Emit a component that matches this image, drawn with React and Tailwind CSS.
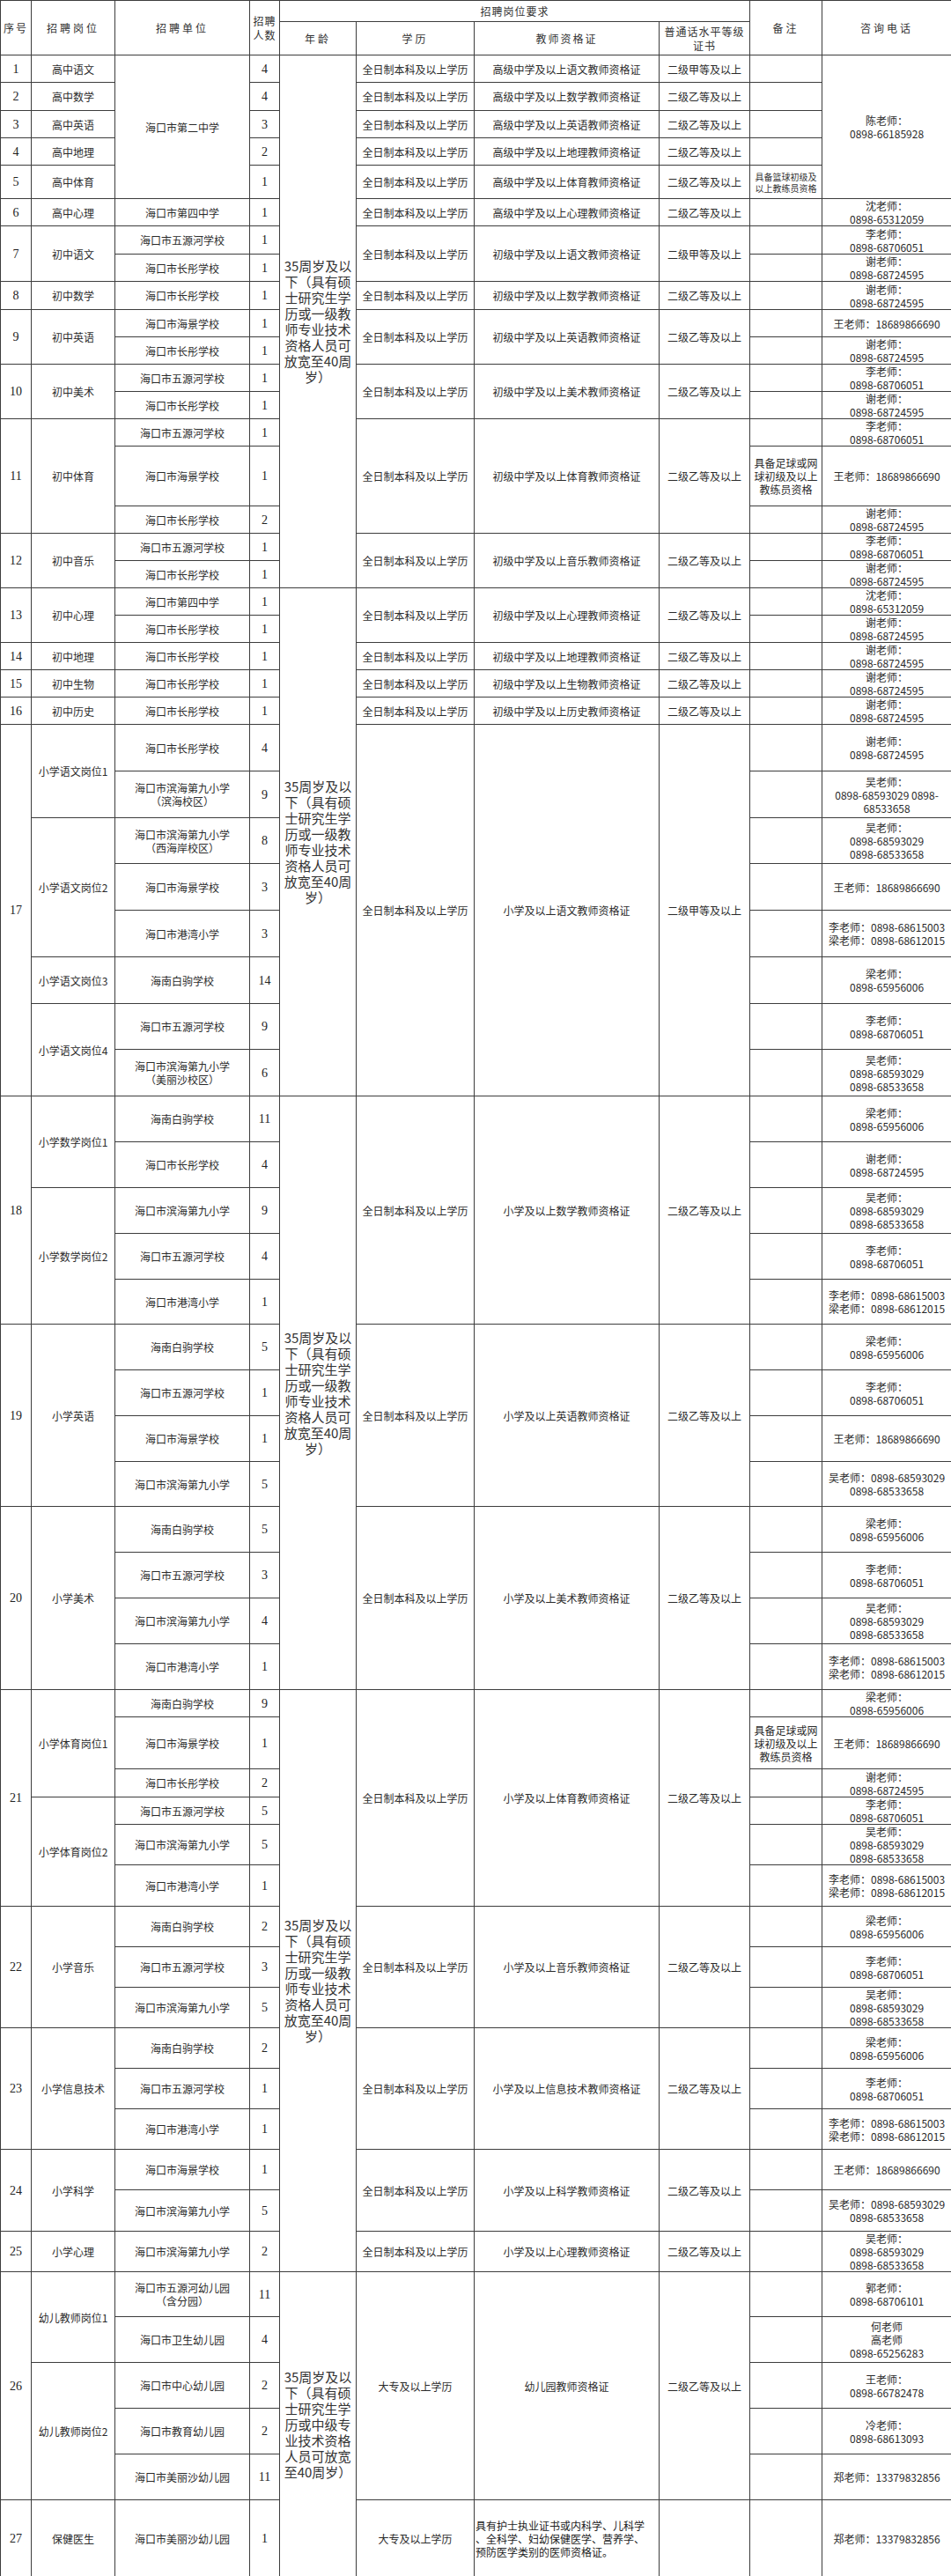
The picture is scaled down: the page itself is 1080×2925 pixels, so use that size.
import React from "react";

// row heights used in the sheet, spelled out so Tailwind sees them
const H = {
  24: "h-[24px]",
  30: "h-[30px]",
  31: "h-[31px]",
  32: "h-[32px]",
  38: "h-[38px]",
  46: "h-[46px]",
  47: "h-[47px]",
  51: "h-[51px]",
  52: "h-[52px]",
  53: "h-[53px]",
  59: "h-[59px]",
  68: "h-[68px]",
  87: "h-[87px]",
};

const AGE1 = "35周岁及以下（具有硕士研究生学历或一级教师专业技术资格人员可放宽至40周岁）";
const AGE2 = "35周岁及以下（具有硕士研究生学历或中级专业技术资格人员可放宽至40周岁）";
const BK = "全日制本科及以上学历";
const DZ = "大专及以上学历";
const JIA = "二级甲等及以上";
const YI = "二级乙等及以上";

const XIE = "谢老师：\n0898-68724595";
const LI = "李老师：\n0898-68706051";
const SHEN = "沈老师：\n0898-65312059";
const WANG = "王老师：18689866690";
const WU3 = "吴老师：\n0898-68593029\n0898-68533658";
const WU2 = "吴老师：0898-68593029\n0898-68533658";
const LL = "李老师：0898-68615003\n梁老师：0898-68612015";
const LIANG = "梁老师：\n0898-65956006";
const FOOT = "具备足球或网\n球初级及以上\n教练员资格";

const CS = "海口市长彤学校";
const WY = "海口市五源河学校";
const HJ = "海口市海景学校";
const BH = "海口市滨海第九小学";
const GW = "海口市港湾小学";
const BJ = "海南白驹学校";

const u = (unit, n, h, contact, note = "", extra = {}) => ({ unit, n, h, contact, note, ...extra });
const one = (name, unit) => [{ name, units: [unit] }];

const items = [
  {
    no: 1, age: AGE1, edu: BK, cert: "高级中学及以上语文教师资格证", pth: JIA,
    pos: one("高中语文", u("海口市第二中学", 4, 31, "陈老师：\n0898-66185928", "", { unitSpan: 5, contactSpan: 5 })),
  },
  { no: 2, edu: BK, cert: "高级中学及以上数学教师资格证", pth: YI, pos: one("高中数学", u(null, 4, 32, null)) },
  { no: 3, edu: BK, cert: "高级中学及以上英语教师资格证", pth: YI, pos: one("高中英语", u(null, 3, 31, null)) },
  { no: 4, edu: BK, cert: "高级中学及以上地理教师资格证", pth: YI, pos: one("高中地理", u(null, 2, 31, null)) },
  {
    no: 5, edu: BK, cert: "高级中学及以上体育教师资格证", pth: YI,
    pos: one("高中体育", u(null, 1, 38, null, "具备篮球初级及\n以上教练员资格", { small: true })),
  },
  { no: 6, edu: BK, cert: "高级中学及以上心理教师资格证", pth: YI, pos: one("高中心理", u("海口市第四中学", 1, 31, SHEN)) },
  {
    no: 7, edu: BK, cert: "初级中学及以上语文教师资格证", pth: JIA,
    pos: [{ name: "初中语文", units: [u(WY, 1, 32, LI), u(CS, 1, 30, XIE)] }],
  },
  { no: 8, edu: BK, cert: "初级中学及以上数学教师资格证", pth: YI, pos: one("初中数学", u(CS, 1, 32, XIE)) },
  {
    no: 9, edu: BK, cert: "初级中学及以上英语教师资格证", pth: YI,
    pos: [{ name: "初中英语", units: [u(HJ, 1, 31, WANG), u(CS, 1, 31, XIE)] }],
  },
  {
    no: 10, edu: BK, cert: "初级中学及以上美术教师资格证", pth: YI,
    pos: [{ name: "初中美术", units: [u(WY, 1, 31, LI), u(CS, 1, 31, XIE)] }],
  },
  {
    no: 11, edu: BK, cert: "初级中学及以上体育教师资格证", pth: YI,
    pos: [{ name: "初中体育", units: [u(WY, 1, 31, LI), u(HJ, 1, 68, WANG, FOOT), u(CS, 2, 31, XIE)] }],
  },
  {
    no: 12, edu: BK, cert: "初级中学及以上音乐教师资格证", pth: YI,
    pos: [{ name: "初中音乐", units: [u(WY, 1, 31, LI), u(CS, 1, 31, XIE)] }],
  },
  {
    no: 13, age: AGE1, edu: BK, cert: "初级中学及以上心理教师资格证", pth: YI,
    pos: [{ name: "初中心理", units: [u("海口市第四中学", 1, 31, SHEN), u(CS, 1, 31, XIE)] }],
  },
  { no: 14, edu: BK, cert: "初级中学及以上地理教师资格证", pth: YI, pos: one("初中地理", u(CS, 1, 31, XIE)) },
  { no: 15, edu: BK, cert: "初级中学及以上生物教师资格证", pth: YI, pos: one("初中生物", u(CS, 1, 31, XIE)) },
  { no: 16, edu: BK, cert: "初级中学及以上历史教师资格证", pth: YI, pos: one("初中历史", u(CS, 1, 31, XIE)) },
  {
    no: 17, edu: BK, cert: "小学及以上语文教师资格证", pth: JIA,
    pos: [
      {
        name: "小学语文岗位1",
        units: [u(CS, 4, 53, XIE), u(BH + "\n（滨海校区）", 9, 53, "吴老师：\n0898-68593029 0898-\n68533658")],
      },
      {
        name: "小学语文岗位2",
        units: [u(BH + "\n（西海岸校区）", 8, 52, WU3), u(HJ, 3, 53, WANG), u(GW, 3, 53, LL)],
      },
      { name: "小学语文岗位3", units: [u(BJ, 14, 53, LIANG)] },
      { name: "小学语文岗位4", units: [u(WY, 9, 52, LI), u(BH + "\n（美丽沙校区）", 6, 53, WU3)] },
    ],
  },
  {
    no: 18, age: AGE1, edu: BK, cert: "小学及以上数学教师资格证", pth: YI,
    pos: [
      { name: "小学数学岗位1", units: [u(BJ, 11, 52, LIANG), u(CS, 4, 52, XIE)] },
      { name: "小学数学岗位2", units: [u(BH, 9, 52, WU3), u(WY, 4, 52, LI), u(GW, 1, 51, LL)] },
    ],
  },
  {
    no: 19, edu: BK, cert: "小学及以上英语教师资格证", pth: YI,
    pos: [{ name: "小学英语", units: [u(BJ, 5, 52, LIANG), u(WY, 1, 52, LI), u(HJ, 1, 52, WANG), u(BH, 5, 51, WU2)] }],
  },
  {
    no: 20, edu: BK, cert: "小学及以上美术教师资格证", pth: YI,
    pos: [{ name: "小学美术", units: [u(BJ, 5, 52, LIANG), u(WY, 3, 52, LI), u(BH, 4, 52, WU3), u(GW, 1, 52, LL)] }],
  },
  {
    no: 21, age: AGE1, edu: BK, cert: "小学及以上体育教师资格证", pth: YI,
    pos: [
      { name: "小学体育岗位1", units: [u(BJ, 9, 31, LIANG), u(HJ, 1, 59, WANG, FOOT), u(CS, 2, 32, XIE)] },
      { name: "小学体育岗位2", units: [u(WY, 5, 30, LI), u(BH, 5, 46, WU3), u(GW, 1, 47, LL)] },
    ],
  },
  {
    no: 22, edu: BK, cert: "小学及以上音乐教师资格证", pth: YI,
    pos: [{ name: "小学音乐", units: [u(BJ, 2, 46, LIANG), u(WY, 3, 46, LI), u(BH, 5, 46, WU3)] }],
  },
  {
    no: 23, edu: BK, cert: "小学及以上信息技术教师资格证", pth: YI,
    pos: [{ name: "小学信息技术", units: [u(BJ, 2, 46, LIANG), u(WY, 1, 46, LI), u(GW, 1, 46, LL)] }],
  },
  {
    no: 24, edu: BK, cert: "小学及以上科学教师资格证", pth: YI,
    pos: [{ name: "小学科学", units: [u(HJ, 1, 46, WANG), u(BH, 5, 47, WU2)] }],
  },
  { no: 25, edu: BK, cert: "小学及以上心理教师资格证", pth: YI, pos: one("小学心理", u(BH, 2, 46, WU3)) },
  {
    no: 26, age: AGE2, edu: DZ, cert: "幼儿园教师资格证", pth: YI,
    pos: [
      {
        name: "幼儿教师岗位1",
        units: [
          u("海口市五源河幼儿园\n（含分园）", 11, 51, "郭老师：\n0898-68706101"),
          u("海口市卫生幼儿园", 4, 52, "何老师\n高老师\n0898-65256283"),
        ],
      },
      {
        name: "幼儿教师岗位2",
        units: [
          u("海口市中心幼儿园", 2, 52, "王老师：\n0898-66782478"),
          u("海口市教育幼儿园", 2, 52, "冷老师：\n0898-68613093"),
          u("海口市美丽沙幼儿园", 11, 52, "郑老师：13379832856"),
        ],
      },
    ],
  },
  {
    no: 27, edu: DZ, certLeft: true, pth: "",
    cert: "具有护士执业证书或内科学、儿科学\n、全科学、妇幼保健医学、营养学、\n预防医学类别的医师资格证。",
    pos: one("保健医生", u("海口市美丽沙幼儿园", 1, 87, "郑老师：13379832856")),
  },
];

const line = "border border-[#3d3d3d]";
const cell = `${line} px-[2px] py-0 text-center align-middle whitespace-pre-line text-[12px] leading-[15px] text-[#2b2b2b]`;
const num = `${line} px-0 py-0 text-center align-middle font-['Liberation_Serif',serif] text-[14px] text-[#222]`;
const ageCls = `${line} px-[4px] py-0 text-center align-middle text-[15px] leading-[18px] text-[#333]`;
const leftCell = `${line} pl-[1px] pr-[2px] py-0 text-left align-middle whitespace-pre-line text-[12px] leading-[15px] text-[#222]`;
const smallNote = `${line} px-[2px] py-0 text-center align-middle whitespace-pre-line text-[10px] leading-[13px] text-[#333]`;
const head = `${line} px-[2px] py-0 text-center align-middle whitespace-pre-line text-[12px] leading-[16px] text-[#333] tracking-[1px]`;

const leafCount = (it) => it.pos.reduce((s, p) => s + p.units.length, 0);

function bodyRows() {
  const out = [];
  items.forEach((it, idx) => {
    const total = leafCount(it);
    let ageSpan = 0;
    if (it.age) {
      for (let j = idx; j < items.length; j++) {
        if (j > idx && items[j].age) break;
        ageSpan += leafCount(items[j]);
      }
    }
    let li = 0;
    it.pos.forEach((p) => {
      p.units.forEach((un, ui) => {
        const first = li === 0;
        out.push(
          <tr key={`${it.no}-${li}`} className={H[un.h]}>
            {first && (
              <td rowSpan={total} className={num}>
                {it.no}
              </td>
            )}
            {ui === 0 && (
              <td rowSpan={p.units.length} className={cell}>
                {p.name}
              </td>
            )}
            {un.unit !== null && (
              <td rowSpan={un.unitSpan || 1} className={cell}>
                {un.unit}
              </td>
            )}
            <td className={num}>{un.n}</td>
            {first && it.age && (
              <td rowSpan={ageSpan} className={ageCls}>
                {it.age}
              </td>
            )}
            {first && (
              <td rowSpan={total} className={cell}>
                {it.edu}
              </td>
            )}
            {first && (
              <td rowSpan={total} className={it.certLeft ? leftCell : cell}>
                {it.cert}
              </td>
            )}
            {first && (
              <td rowSpan={total} className={cell}>
                {it.pth}
              </td>
            )}
            <td className={un.small ? smallNote : `${cell} leading-[14px]`}>{un.note}</td>
            {un.contact !== null && (
              <td rowSpan={un.contactSpan || 1} className={cell}>
                {un.contact}
              </td>
            )}
          </tr>
        );
        li++;
      });
    });
  });
  return out;
}

export default function App() {
  return (
    <div className="w-[1080px] bg-white font-['Noto_Sans_CJK_SC',sans-serif]">
      <table className="w-[1080px] table-fixed border-collapse">
        <colgroup>
          <col className="w-[35px]" />
          <col className="w-[95px]" />
          <col className="w-[153px]" />
          <col className="w-[34px]" />
          <col className="w-[87px]" />
          <col className="w-[134px]" />
          <col className="w-[210px]" />
          <col className="w-[103px]" />
          <col className="w-[82px]" />
          <col className="w-[147px]" />
        </colgroup>
        <thead>
          <tr className={H[24]}>
            <th rowSpan={2} className={`${head} font-normal tracking-[2px]`}>序号</th>
            <th rowSpan={2} className={`${head} font-normal tracking-[3px]`}>招聘岗位</th>
            <th rowSpan={2} className={`${head} font-normal tracking-[3px]`}>招聘单位</th>
            <th rowSpan={2} className={`${head} font-normal`}>{"招聘\n人数"}</th>
            <th colSpan={4} className={`${head} font-normal`}>招聘岗位要求</th>
            <th rowSpan={2} className={`${head} font-normal tracking-[3px]`}>备注</th>
            <th rowSpan={2} className={`${head} font-normal tracking-[3px]`}>咨询电话</th>
          </tr>
          <tr className={H[38]}>
            <th className={`${head} font-normal tracking-[3px]`}>年龄</th>
            <th className={`${head} font-normal tracking-[3px]`}>学历</th>
            <th className={`${head} font-normal tracking-[2px]`}>教师资格证</th>
            <th className={`${head} font-normal`}>{"普通话水平等级\n证书"}</th>
          </tr>
        </thead>
        <tbody>{bodyRows()}</tbody>
      </table>
    </div>
  );
}
